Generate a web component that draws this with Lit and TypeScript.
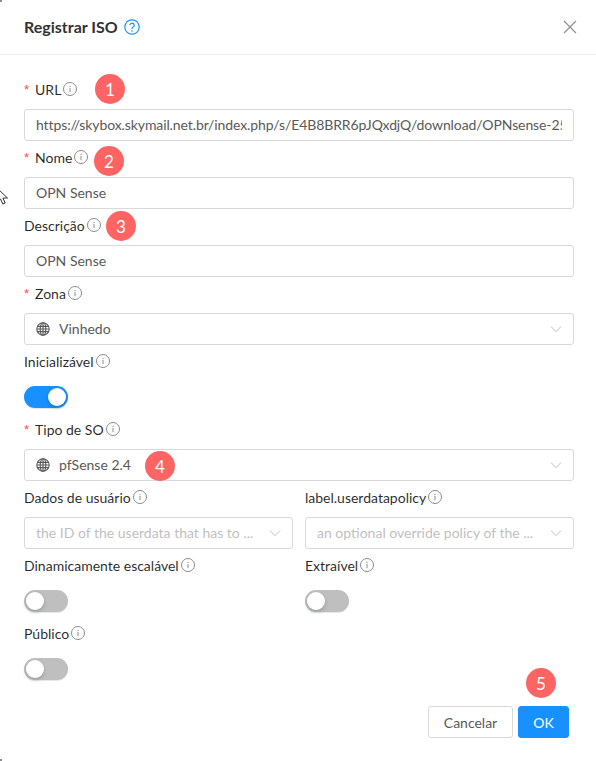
import { LitElement, html, css } from 'lit';
import { customElement } from 'lit/decorators.js';

const infoIcon = html`<svg class="info" viewBox="0 0 14 14" width="14" height="14">
  <circle cx="7" cy="7" r="6.5" fill="none" stroke="#8c8c8c" stroke-width="1"></circle>
  <rect x="6.5" y="6" width="1" height="4.2" fill="#8c8c8c"></rect>
  <rect x="6.5" y="3.9" width="1" height="1.2" fill="#8c8c8c"></rect>
</svg>`;

const globeIcon = html`<svg class="globe" viewBox="0 0 14 14" width="14" height="14">
  <g fill="none" stroke="#595959" stroke-width="1.1">
    <circle cx="7" cy="7" r="6.2"></circle>
    <ellipse cx="7" cy="7" rx="2.8" ry="6.2"></ellipse>
    <path d="M7 1v12M1.2 4.4h11.6M1 7h12M1.2 9.6h11.6"></path>
  </g>
</svg>`;

const chevron = html`<svg class="chevron" viewBox="0 0 12 12" width="12" height="12">
  <path d="M1 3.6 6 8.6 11 3.6" fill="none" stroke="#bfbfbf" stroke-width="1"></path>
</svg>`;

const badges = [
  { n: 1, x: 110, y: 89 },
  { n: 2, x: 109, y: 161 },
  { n: 3, x: 121, y: 226 },
  { n: 4, x: 160, y: 466 },
  { n: 5, x: 541, y: 683 },
];

@customElement('app-root')
export class AppRoot extends LitElement {
  static styles = css`
    :host {
      display: block;
      position: relative;
      width: 596px;
      height: 761px;
      background: #fff;
      overflow: hidden;
      font-family: Lato, 'Open Sans', sans-serif;
      font-size: 14px;
      color: rgba(0, 0, 0, 0.85);
    }
    .header {
      height: 55px;
      box-sizing: border-box;
      border-bottom: 1px solid #f0f0f0;
      padding: 0 24px;
      display: flex;
      align-items: center;
      justify-content: space-between;
    }
    .title {
      display: flex;
      align-items: center;
      gap: 6px;
      font-size: 16px;
      font-weight: 700;
      color: #333;
    }
    .title span {
      padding-bottom: 2px;
    }
    .close {
      display: block;
      margin-right: -5px;
    }
    .form {
      padding: 23px 22px 0 24px;
    }
    .item {
      margin-bottom: 5px;
    }
    .label {
      height: 22px;
      margin-bottom: 9px;
      display: flex;
      align-items: center;
      gap: 2px;
      white-space: nowrap;
    }
    .label .req {
      color: #ff4d4f;
      margin-right: 4px;
      font-family: 'Liberation Sans', sans-serif;
      font-size: 13px;
    }
    .info {
      display: block;
    }
    .input {
      height: 32px;
      box-sizing: border-box;
      border: 1px solid #d9d9d9;
      border-radius: 3px;
      padding: 0 11px;
      display: flex;
      align-items: center;
      color: #595959;
      white-space: nowrap;
      overflow: hidden;
    }
    .input span {
      overflow: hidden;
      min-width: 0;
      padding-bottom: 2px;
    }
    .input.url {
      letter-spacing: -0.1px;
    }
    .select {
      justify-content: space-between;
    }
    .value {
      display: flex;
      align-items: center;
      gap: 9px;
    }
    .input .placeholder {
      color: #bfbfbf;
      padding-right: 12px;
      flex: 1;
    }
    .chevron {
      flex: none;
    }
    .cols {
      display: grid;
      grid-template-columns: 269px 269px;
      column-gap: 12px;
    }
    .switch {
      width: 44px;
      height: 22px;
      margin-top: 14px;
      margin-bottom: 10px;
      border-radius: 11px;
      background: #bfbfbf;
      position: relative;
      box-shadow: 0 1px 1px rgba(0, 0, 0, 0.1);
    }
    .cols .switch {
      margin-bottom: 5px;
    }
    .switch.on {
      background: #1890ff;
    }
    .switch::after {
      content: '';
      position: absolute;
      top: 2px;
      left: 2px;
      width: 18px;
      height: 18px;
      border-radius: 50%;
      background: #fff;
      box-shadow: 0 2px 4px rgba(0, 35, 11, 0.2);
    }
    .switch.on::after {
      left: 24px;
    }
    .footer {
      position: absolute;
      right: 27px;
      top: 706px;
      display: flex;
      gap: 5px;
    }
    button {
      height: 32px;
      border-radius: 3px;
      font: inherit;
      border: 1px solid #d9d9d9;
      background: #fff;
      color: #595959;
      padding: 0;
      width: 85px;
    }
    button.primary {
      width: 51px;
      background: #1890ff;
      border-color: #1890ff;
      color: #fff;
    }
    .badge {
      position: absolute;
      width: 30px;
      height: 30px;
      margin: -15px 0 0 -15px;
      border-radius: 50%;
      background: #ff6464;
      color: #fff;
      font-size: 17px;
      display: flex;
      align-items: center;
      justify-content: center;
    }
    .cursor {
      position: absolute;
      left: -4px;
      top: 187px;
    }
    .speck {
      position: absolute;
      left: 0;
      width: 2px;
      height: 2px;
      background: #8c8c8c;
    }
  `;

  private label(text: string, required = false) {
    return html`<div class="label">
      ${required ? html`<span class="req">*</span>` : ''}<span>${text}</span>${infoIcon}
    </div>`;
  }

  private field(text: string, value: string, required = false, extra = '') {
    return html`<div class="item">
      ${this.label(text, required)}
      <div class="input ${extra}"><span>${value}</span></div>
    </div>`;
  }

  private globeSelect(text: string, value: string) {
    return html`<div class="item">
      ${this.label(text, true)}
      <div class="input select">
        <div class="value">${globeIcon}<span>${value}</span></div>
        ${chevron}
      </div>
    </div>`;
  }

  private emptySelect(text: string, placeholder: string) {
    return html`<div class="item">
      ${this.label(text)}
      <div class="input select">
        <span class="placeholder">${placeholder}</span>
        ${chevron}
      </div>
    </div>`;
  }

  private toggle(text: string, on = false) {
    return html`<div class="item">
      ${this.label(text)}
      <div class="switch ${on ? 'on' : ''}"></div>
    </div>`;
  }

  render() {
    return html`
      <div class="header">
        <div class="title">
          <span>Registrar ISO</span>
          <svg viewBox="0 0 16 16" width="16" height="16">
            <circle cx="8" cy="8" r="7.2" fill="none" stroke="#1890ff" stroke-width="1.2"></circle>
            <path d="M5.8 6.2a2.2 2.1 0 1 1 3.4 1.8c-.8.5-1.2 1-1.2 1.8v.3" fill="none" stroke="#1890ff" stroke-width="1.2"></path>
            <rect x="7.3" y="11.2" width="1.4" height="1.4" fill="#1890ff"></rect>
          </svg>
        </div>
        <svg class="close" viewBox="0 0 14 14" width="14" height="14">
          <path d="M1 1l12 12M13 1 1 13" fill="none" stroke="#8c8c8c" stroke-width="1.1"></path>
        </svg>
      </div>
      <div class="form">
        ${this.field('URL', 'https://skybox.skymail.net.br/index.php/s/E4B8BRR6pJQxdjQ/download/OPNsense-25', true, 'url')}
        ${this.field('Nome', 'OPN Sense', true)}
        ${this.field('Descrição', 'OPN Sense')}
        ${this.globeSelect('Zona', 'Vinhedo')}
        ${this.toggle('Inicializável', true)}
        ${this.globeSelect('Tipo de SO', 'pfSense 2.4')}
        <div class="cols">
          ${this.emptySelect('Dados de usuário', 'the ID of the userdata that has to ...')}
          ${this.emptySelect('label.userdatapolicy', 'an optional override policy of the ...')}
          ${this.toggle('Dinamicamente escalável')}
          ${this.toggle('Extraível')}
        </div>
        ${this.toggle('Público')}
      </div>
      <div class="footer">
        <button>Cancelar</button>
        <button class="primary">OK</button>
      </div>
      ${badges.map(
        (b) => html`<div class="badge" style="left:${b.x}px;top:${b.y}px">${b.n}</div>`
      )}
      <svg class="cursor" viewBox="0 0 14 20" width="14" height="20">
        <path d="M1 1v14l3.5-3 2.3 5 2.4-1-2.3-5h4.6z" fill="#fff" stroke="#333" stroke-width="1"></path>
      </svg>
      <div class="speck" style="top:0"></div>
      <div class="speck" style="top:759px"></div>
    `;
  }
}
